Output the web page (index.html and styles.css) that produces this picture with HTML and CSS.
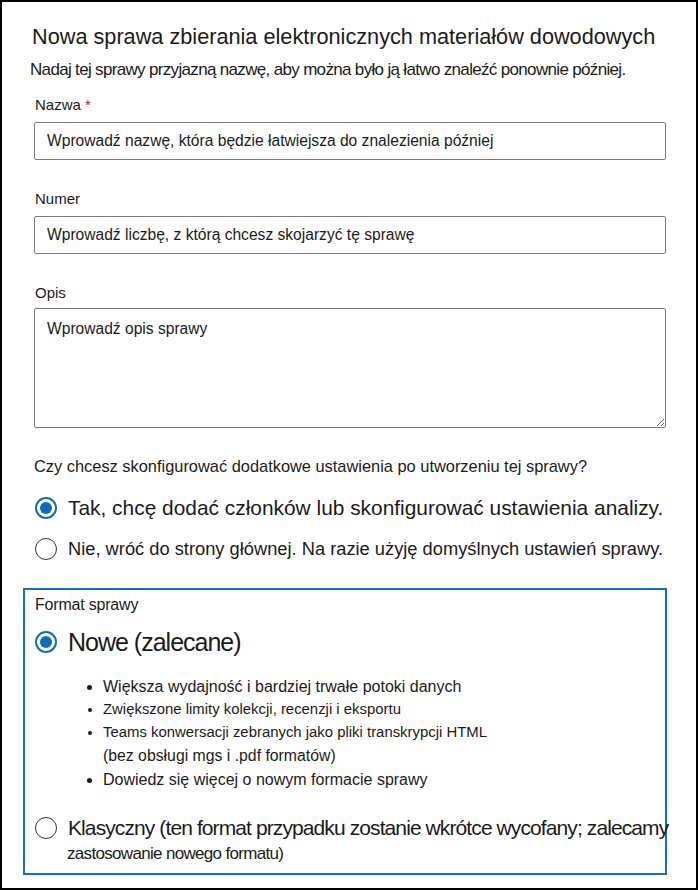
FILE: index.html
```html
<!DOCTYPE html>
<html lang="pl">
<head>
<meta charset="utf-8">
<title>Nowa sprawa</title>
<link rel="stylesheet" href="styles.css">
</head>
<body>
<div class="panel">
  <h1 class="title">Nowa sprawa zbierania elektronicznych materiałów dowodowych</h1>
  <p class="subtitle">Nadaj tej sprawy przyjazną nazwę, aby można było ją łatwo znaleźć ponownie później.</p>

  <div class="field field-name">
    <label class="label" for="name">Nazwa <span class="req">*</span></label>
    <input class="input" id="name" type="text" placeholder="Wprowadź nazwę, która będzie łatwiejsza do znalezienia później">
  </div>

  <div class="field field-num">
    <label class="label" for="num">Numer</label>
    <input class="input" id="num" type="text" placeholder="Wprowadź liczbę, z którą chcesz skojarzyć tę sprawę">
  </div>

  <div class="field field-desc">
    <label class="label label-desc" for="desc">Opis</label>
    <textarea class="textarea" id="desc" placeholder="Wprowadź opis sprawy"></textarea>
  </div>

  <p class="question">Czy chcesz skonfigurować dodatkowe ustawienia po utworzeniu tej sprawy?</p>

  <div class="radio-group">
    <div class="radio radio-yes">
      <span class="dot dot-checked"></span>
      <span class="radio-text">Tak, chcę dodać członków lub skonfigurować ustawienia analizy.</span>
    </div>
    <div class="radio radio-no">
      <span class="dot"></span>
      <span class="radio-text">Nie, wróć do strony głównej. Na razie użyję domyślnych ustawień sprawy.</span>
    </div>
  </div>

  <div class="format-box">
    <div class="format-label">Format sprawy</div>
    <div class="radio radio-new">
      <span class="dot dot-checked"></span>
      <span class="radio-text">Nowe (zalecane)</span>
    </div>
    <ul class="features">
      <li>Większa wydajność i bardziej trwałe potoki danych</li>
      <li class="small">Zwiększone limity kolekcji, recenzji i eksportu</li>
      <li class="small">Teams konwersacji zebranych jako pliki transkrypcji HTML<br><span class="cont">(bez obsługi mgs i .pdf formatów)</span></li>
      <li>Dowiedz się więcej o nowym formacie sprawy</li>
    </ul>
    <div class="radio radio-classic">
      <span class="dot"></span>
      <span class="radio-text">Klasyczny (ten format przypadku zostanie wkrótce wycofany; zalecamy</span>
    </div>
    <div class="classic-sub">zastosowanie nowego formatu)</div>
  </div>
</div>
</body>
</html>
```

FILE: styles.css
```css
* {
  box-sizing: border-box;
}

body {
  margin: 0;
  background: #fff;
  color: #1b1a19;
  font-family: "Liberation Sans", Arial, sans-serif;
}

.panel {
  width: 698px;
  height: 890px;
  border: 2px solid #000;
  padding: 21px 0 0 30px;
  overflow: hidden;
}

.title {
  margin: 0;
  font-size: 21.7px;
  font-weight: 400;
  line-height: 28px;
  color: #1b1a19;
}

.subtitle {
  margin: 9px 0 0 -2px;
  font-size: 17px;
  letter-spacing: -0.67px;
  line-height: 20px;
}

.field {
  display: flex;
  flex-direction: column;
}

.field-name {
  margin-top: 15px;
}

.field-num,
.field-desc {
  margin-top: 29px;
}

.label {
  margin-left: 3px;
  font-size: 15px;
  line-height: 20px;
}

.req {
  color: #a4262c;
}

.input,
.textarea {
  margin: 7px 0 0 2px;
  width: 632px;
  border: 1px solid #7f7d7b;
  border-radius: 2px;
  font-family: "Liberation Sans", Arial, sans-serif;
  font-size: 15.6px;
  color: #1b1a19;
  background: #fff;
}

.input {
  height: 38px;
  padding: 0 12px;
}

.textarea {
  margin-top: 5px;
  height: 120px;
  padding: 11px 12px;
  line-height: 18px;
  resize: vertical;
}

.input::placeholder,
.textarea::placeholder {
  color: #1b1a19;
  opacity: 1;
}

.question {
  margin: 28px 0 0 2px;
  font-size: 16.4px;
  line-height: 20px;
}

.radio-group {
  margin-top: 18px;
  display: flex;
  flex-direction: column;
  gap: 13px;
}

.radio {
  display: flex;
  align-items: center;
  gap: 11px;
  margin-left: 3px;
  height: 28px;
  white-space: nowrap;
}

.dot {
  flex: none;
  position: relative;
  width: 22px;
  height: 22px;
  border: 1.5px solid #323130;
  border-radius: 50%;
  background: #fff;
}

.dot-checked {
  border: 2px solid #0f6cbd;
}

.dot-checked::after {
  content: "";
  position: absolute;
  left: 3px;
  top: 3px;
  width: 12px;
  height: 12px;
  border-radius: 50%;
  background: #0f6cbd;
}

.radio-yes .radio-text {
  font-size: 20.9px;
}

.radio-no .radio-text {
  font-size: 18.3px;
}

.format-box {
  margin: 25px 0 0 -9px;
  width: 644px;
  height: 287px;
  border: 2px solid #1b6ec2;
  padding: 5px 0 0 10px;
}

.format-label {
  font-size: 16px;
  letter-spacing: -0.2px;
  line-height: 20px;
}

.radio-new {
  margin: 12px 0 0 0;
  height: 30px;
}

.radio-new .radio-text {
  font-size: 25px;
  letter-spacing: -1px;
}

.features {
  margin: 18px 0 0 0;
  padding-left: 68px;
  font-size: 16px;
  line-height: 23px;
}

.features .small {
  font-size: 14.9px;
}

.features .cont {
  font-size: 15.8px;
}

.radio-classic {
  margin: 24px 0 0 0;
  height: 26px;
}

.radio-classic .radio-text {
  font-size: 21px;
  letter-spacing: -0.9px;
}

.classic-sub {
  margin: 3px 0 0 32px;
  font-size: 17px;
  letter-spacing: -0.68px;
  line-height: 20px;
}
```
